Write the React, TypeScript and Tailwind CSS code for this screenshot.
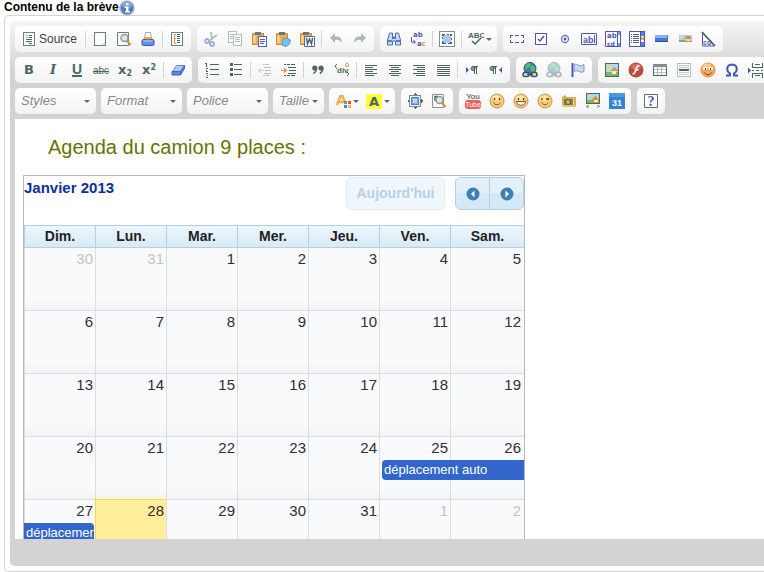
import React from "react";

type IconProps = { children: React.ReactNode; soft?: boolean; faded?: boolean };

function Icon({ children, soft, faded }: IconProps) {
  return (
    <svg
      width="16"
      height="16"
      viewBox="0 0 16 16"
      fill="none"
      shapeRendering={soft ? "auto" : "crispEdges"}
      className={faded ? "shrink-0 opacity-40" : "shrink-0"}
      aria-hidden="true"
    >
      {children}
    </svg>
  );
}

const INK = "#4c6666";
const BLUE = "#4f55b8";

function Sheet() {
  return <path d="M2.5 1.5h11v13h-11z" fill="#fdfdfd" stroke="#6a8080" />;
}

function Landscape() {
  return (
    <>
      <path d="M1.5 1.5h13v13h-13z" fill="#a9ddf5" stroke={INK} />
      <path d="M2 10h12v4H2z" fill="#7cc04b" />
      <path d="M3 3h3v3H3z" fill="#ffd34d" />
      <path d="M6 9l4-4 4 4z" fill="#ee8b35" />
      <path d="M8 9h4v3H8z" fill="#fff0cf" />
    </>
  );
}

function Clipboard() {
  return (
    <>
      <path d="M1.5 2.5h11v11h-11z" fill="#f2ac55" stroke="#c58a45" />
      <path d="M4 1h6v3H4z" fill="#6b7780" />
      <path d="M2 5h3v7H2z" fill="#f9cb86" />
    </>
  );
}

function Face({ mouth, wink }: { mouth: React.ReactNode; wink?: boolean }) {
  return (
    <Icon soft>
      <circle cx="8" cy="8" r="7" fill="#f9cb78" stroke="#c9924f" />
      <ellipse cx="7" cy="5" rx="4" ry="2.5" fill="#ffe8ab" />
      <path d={wink ? "M5 5v2M9 6h3" : "M5.5 5v2M10.5 5v2"} stroke="#5b3b14" strokeWidth="1.3" />
      {mouth}
    </Icon>
  );
}

function Globe({ faded }: { faded?: boolean }) {
  return (
    <Icon soft faded={faded}>
      <circle cx="8" cy="6.5" r="6" fill="#3a78dd" stroke="#2b5096" />
      <path d="M3 4l3-3 3 1-1 3-3 1-1 3zM10 3l3 2v4l-3 1-2-3z" fill="#56c44b" />
      <rect x="1" y="10.5" width="6" height="4" rx="2" fill="#dce5e5" stroke="#3c5656" strokeWidth="1.5" />
      <rect x="9" y="10.5" width="6" height="4" rx="2" fill="#dce5e5" stroke="#3c5656" strokeWidth="1.5" />
      <path d="M5 12.500h6" stroke="#3c5656" strokeWidth="1.5" />
    </Icon>
  );
}

function Magnifier() {
  return (
    <>
      <circle cx="8.5" cy="7" r="3.5" fill="#dce8ea" stroke="#8e9c9e" strokeWidth="1.5" />
      <path d="M11 10l3.5 4" stroke="#db8d35" strokeWidth="2.2" />
    </>
  );
}

function Align({ rows }: { rows: string }) {
  return (
    <Icon>
      <path d={rows} stroke={INK} />
    </Icon>
  );
}

const ICONS = {
  source: (
    <Icon>
      <Sheet />
      <path d="M8 4.500h3M8 6.500h3M5 8.500h6M5 10.500h6M8 12.500h3" stroke={INK} />
      <path d="M5 4.500h2M5 6.500h2" stroke="#e9a64a" />
    </Icon>
  ),
  page: (
    <Icon>
      <Sheet />
      <path d="M9 14l4-4v4z" fill="#d9dede" />
    </Icon>
  ),
  preview: (
    <Icon soft>
      <path d="M1.500 1.500h11v13h-11z" fill="#fdfdfd" stroke="#6a8080" />
      <Magnifier />
    </Icon>
  ),
  print: (
    <Icon soft>
      <path d="M5.500 1.500h5l1 6h-7z" fill="#f4f8ff" stroke="#9fa9bf" />
      <path d="M3 9l1-3h8l1 3z" fill="#f0a24c" />
      <rect x="2" y="8.500" width="12" height="6" rx="1.500" fill="#5d92ee" stroke="#3559bd" />
      <path d="M3.500 10h9" stroke="#b7d2ff" />
      <path d="M5 8.500h6" stroke="#a4641f" />
    </Icon>
  ),
  template: (
    <Icon>
      <Sheet />
      <path d="M8 3.500h3M8 5.500h3M8 7.500h3M8 9.500h3M8 11.500h3" stroke={INK} />
      <path d="M5.500 3v10M5 3.500h2M5 7.500h2M5 12.500h2" stroke="#e99b3c" />
    </Icon>
  ),
  cut: (
    <Icon soft>
      <path d="M8 1l1 8M14 4L6 10" stroke="#b4bfc4" strokeWidth="2" />
      <circle cx="4" cy="10" r="2" stroke="#9aabdf" strokeWidth="1.800" />
      <circle cx="9" cy="13" r="2" stroke="#9aabdf" strokeWidth="1.800" />
    </Icon>
  ),
  copy: (
    <Icon faded>
      <path d="M1.500 .5h8v11h-8z" fill="#fff" stroke={INK} />
      <path d="M3 3.500h4M3 5.500h4M3 7.500h4" stroke={INK} />
      <path d="M6.500 3.500h8v11h-8z" fill="#fff" stroke={INK} />
      <path d="M8 6.500h5M8 8.500h5M8 10.500h5" stroke={INK} />
    </Icon>
  ),
  paste: (
    <Icon>
      <Clipboard />
      <path d="M7.500 5.500h8v10h-8z" fill="#fff" stroke="#4468c8" />
      <path d="M9 8.500h5M9 10.500h5M9 12.500h4" stroke={BLUE} />
    </Icon>
  ),
  pasteText: (
    <Icon soft>
      <Clipboard />
      <path d="M7.500 8l4-1 4 2-1 4-3 2.500-4-1z" fill="#77bfe4" stroke="#5a9cc8" />
    </Icon>
  ),
  pasteWord: (
    <Icon soft>
      <Clipboard />
      <path d="M5.500 5.500h10v10h-10z" fill="#fff" stroke="#4468c8" />
      <path d="M7.500 7l1 6 2-5 2 5 1-6" stroke={INK} strokeWidth="1.500" />
    </Icon>
  ),
  undo: (
    <Icon soft>
      <path d="M2 7l5-5v3.500h2c4 0 5 3 5 6.500-1-2-2.500-3-5-3H7v3z" fill="#aab9b9" />
    </Icon>
  ),
  redo: (
    <Icon soft>
      <path d="M14 7L9 2v3.500H7c-4 0-5 3-5 6.500 1-2 2.500-3 5-3h2v3z" fill="#aab9b9" />
    </Icon>
  ),
  find: (
    <Icon soft>
      <path d="M3.500 2h3v4h3V2h3l2 7v5h-5v-4h-3v4h-5V9z" fill="#c3daf8" stroke="#4d6fc0" />
      <path d="M2 10h4M10 10h4M6 7h4" stroke="#3e5ba9" strokeWidth="1.500" />
    </Icon>
  ),
  replace: (
    <Icon soft>
      <text x="3" y="6" fontSize="7" fontWeight="700" fill={BLUE} fontFamily="DejaVu Sans, sans-serif">ab</text>
      <text x="7" y="15" fontSize="7" fontWeight="700" fill={BLUE} fontFamily="DejaVu Sans, sans-serif">
        a<tspan fill="#e79938">c</tspan>
      </text>
      <path d="M1.500 6v5H5M3.500 9l2 2-2 2" stroke={BLUE} />
    </Icon>
  ),
  selectAll: (
    <Icon>
      <path d="M.5 .5h15v15H.5z" fill="#fff" stroke="#7b8f8f" />
      <path d="M4 4h8v8H4z" fill="#a8c8f2" />
      <path d="M3.500 3.500h9v9h-9z" stroke={INK} strokeDasharray="2 2" />
      <path d="M3 3h2v2H3zM11 3h2v2h-2zM3 11h2v2H3zM11 11h2v2h-2z" fill={INK} />
    </Icon>
  ),
  spell: (
    <Icon soft>
      <text x="0" y="7" fontSize="8" fontWeight="700" fill={INK} fontFamily="Liberation Sans, sans-serif">ABC</text>
      <path d="M4 10l3 3 6-6" stroke={INK} strokeWidth="1.500" />
    </Icon>
  ),
  form: (
    <Icon>
      <path d="M1 4.500h3M6 4.500h4M12 4.500h3M1 11.500h3M6 11.500h4M12 11.500h3M1.500 4v3M1.500 9v3M14.500 4v3M14.500 9v3" stroke={BLUE} />
    </Icon>
  ),
  checkbox: (
    <Icon>
      <path d="M2.500 2.500h11v11h-11z" fill="#fafcff" stroke={BLUE} />
      <path d="M5 8l2 2 4-5" stroke={BLUE} strokeWidth="1.500" shapeRendering="auto" />
    </Icon>
  ),
  radio: (
    <Icon soft>
      <circle cx="8" cy="8" r="3.500" fill="#fff" stroke="#6b74c6" strokeWidth="1.300" />
      <circle cx="8" cy="8" r="1.500" fill={BLUE} />
    </Icon>
  ),
  textField: (
    <Icon soft>
      <path d="M.5 2.500h15v11H.5z" fill="#fff" stroke={BLUE} />
      <text x="2" y="12" fontSize="9" fontWeight="700" fill={BLUE} fontFamily="Liberation Sans, sans-serif">ab</text>
      <path d="M13.500 4v8" stroke={BLUE} />
    </Icon>
  ),
  textarea: (
    <Icon soft>
      <path d="M.5 .5h15v15H.5zM12.500 1v14" fill="#fff" stroke={BLUE} />
      <text x="2" y="7" fontSize="7" fontWeight="700" fill={BLUE} fontFamily="DejaVu Sans, sans-serif">
        ab
      </text>
      <text x="2" y="15" fontSize="6" fontWeight="700" fill={BLUE} fontFamily="DejaVu Sans, sans-serif">
        cd
      </text>
      <path d="M13 1h2v3h-2zM13 12h2v3h-2z" fill="#79a6e6" />
    </Icon>
  ),
  select: (
    <Icon>
      <path d="M.5 .5h15v15H.5zM11.500 1v14" fill="#fff" stroke={BLUE} />
      <path d="M2 3.500h1M4 3.500h6M2 5.500h1M4 5.500h6M2 7.500h1M4 7.500h6M2 9.500h1M4 9.500h6M2 11.500h1M4 11.500h6" stroke={INK} />
      <path d="M12 1h3v4h-3zM12 11h3v4h-3z" fill="#5a80d8" />
      <path d="M12 6h3v3h-3z" fill="#efa64c" />
    </Icon>
  ),
  button: (
    <Icon>
      <path d="M2 4h13v7H2z" fill="#4a78da" />
      <path d="M2 4h12v3H2z" fill="#8db2f0" />
      <path d="M2 10.500h13" stroke="#32479a" />
    </Icon>
  ),
  imageButton: (
    <Icon>
      <path d="M2 4h13v7H2z" fill="#a4d2f2" />
      <path d="M2 9h13v2H2z" fill="#8fa586" />
      <path d="M9 5h4v1h1v2H8V6h1z" fill="#ec8a34" />
      <path d="M9 8h5v2H9z" fill="#f8d49c" />
      <path d="M3 5h3v2H3z" fill="#f8e070" />
    </Icon>
  ),
  hidden: (
    <Icon soft>
      <path d="M1.500 2v13h12z" fill="#fff" stroke={BLUE} />
      <text x="2" y="14" fontSize="7" fontWeight="700" fill={BLUE} fontFamily="Liberation Sans, sans-serif">cd</text>
      <path d="M1 1l13 14" stroke={INK} strokeWidth="1.800" />
    </Icon>
  ),
  eraser: (
    <Icon soft>
      <path d="M6.500 3.500h8l-4 6h-8z" fill="#b0cdfa" stroke="#6480d4" />
      <path d="M2 9.500h8.500V13H2zM10.500 13V9.500l4-6v3z" fill="#5f86e2" stroke="#4a5cc0" />
    </Icon>
  ),
  numbered: (
    <Icon>
      <path d="M6 2.500h9M6 7.500h9M6 12.500h9M2.500 1v4M1 1.500h1M2 6.500h2M3 8.500H2M2 9.500h2M2 11.500h2M3 13.500h1M2 15.500h2" stroke={INK} />
    </Icon>
  ),
  bulleted: (
    <Icon>
      <path d="M6 2.500h8M6 7.500h8M6 12.500h8" stroke={INK} />
      <path d="M2 1h3v3H2zM2 6h3v3H2zM2 11h3v3H2z" fill={INK} />
    </Icon>
  ),
  outdent: (
    <Icon faded>
      <path d="M6 2.500h2M9 2.500h3M7 5.500h7M8 8.500h6M7 11.500h7M6 13.500h2M9 13.500h3" stroke={INK} />
      <path d="M1 8.500h6M3.500 6v5M2.500 7v3" stroke="#e99534" />
    </Icon>
  ),
  indent: (
    <Icon>
      <path d="M3 2.500h2M6 2.500h3M10 2.500h4M7 5.500h8M8 8.500h7M7 11.500h8M3 13.500h2M6 13.500h3M10 13.500h4" stroke={INK} />
      <path d="M0 8.500h6M3.500 6v5M4.500 7v3" stroke="#e99534" />
    </Icon>
  ),
  quote: (
    <Icon soft>
      <circle cx="4.800" cy="6" r="2.600" fill={INK} />
      <circle cx="11" cy="6" r="2.600" fill={INK} />
      <path d="M6.500 6c0 3-1 4.500-3 5.500M12.800 6c0 3-1 4.500-3 5.500" stroke={INK} strokeWidth="1.400" />
    </Icon>
  ),
  div: (
    <Icon soft>
      <text x="3" y="11" fontSize="8" fontWeight="700" fill={INK} fontFamily="Liberation Sans, sans-serif">div</text>
      <path d="M3 2L1 4l2 3M13 10l2 2-2 2" stroke={INK} />
      <path d="M13 1l2 2-2 2-2-2z" stroke="#e99534" />
    </Icon>
  ),
  left: <Align rows="M2 3.500h12M2 5.500h8M2 7.500h12M2 9.500h8M2 11.500h12M2 13.500h9" />,
  center: <Align rows="M2 3.500h12M4 5.500h8M2 7.500h12M4 9.500h8M2 11.500h12M4 13.500h8" />,
  right: <Align rows="M2 3.500h12M6 5.500h8M2 7.500h12M6 9.500h8M2 11.500h12M5 13.500h9" />,
  justify: <Align rows="M2 3.500h13M2 5.500h13M2 7.500h13M2 9.500h13M2 11.500h13M2 13.500h13" />,
  ltr: (
    <Icon soft>
      <path d="M2 5l3 3-3 3z" fill={BLUE} />
      <path d="M14 4.500H9a2 2 0 000 4h1M10.500 4v8M12.500 4v8" fill="#869898" stroke={INK} />
    </Icon>
  ),
  rtl: (
    <Icon soft>
      <path d="M14 5l-3 3 3 3z" fill={BLUE} />
      <path d="M9 4.500H4a2 2 0 000 4h1M5.500 4v8M7.500 4v8" fill="#869898" stroke={INK} />
    </Icon>
  ),
  link: <Globe />,
  unlink: <Globe faded />,
  anchor: (
    <Icon soft>
      <path d="M2.500 1v14" stroke={BLUE} strokeWidth="2" />
      <path d="M4 2.500c2-1 3 0 5 1s3 0 5-1v7c-2 1-3 1-5 0s-3-1-5 0z" fill="#ccdaf0" stroke="#8393d2" />
    </Icon>
  ),
  image: (
    <Icon>
      <Landscape />
    </Icon>
  ),
  flash: (
    <Icon soft>
      <circle cx="8" cy="8" r="7" fill="#c24639" stroke="#a5483f" />
      <ellipse cx="8" cy="5" rx="5" ry="3" fill="#dc6c5c" />
      <path d="M11.500 3.500C8 3.500 8 8 7 10c-.5 1.500-1 2-2.500 2M7 8h3.500" stroke="#fff" strokeWidth="1.700" />
    </Icon>
  ),
  table: (
    <Icon>
      <path d="M1.500 2.500h13v11h-13z" fill="#fff" stroke={INK} />
      <path d="M1 2h14v3H1z" fill="#7d9090" />
      <path d="M2 7.500h12M2 10.500h12M5.500 5v8M9.500 5v8" stroke="#b2bdbd" />
    </Icon>
  ),
  rule: (
    <Icon>
      <path d="M1.500 1.500h13v13h-13z" fill="#fff" stroke="#b5bfbf" />
      <path d="M3 3.500h10M3 5.500h10M3 10.500h10M3 12.500h10" stroke="#c1c9c9" />
      <path d="M3 7h10v2H3z" fill={INK} />
    </Icon>
  ),
  smiley: (
    <Icon soft>
      <circle cx="8" cy="8" r="7" fill="#f5a557" stroke="#e39048" />
      <ellipse cx="7" cy="4" rx="4" ry="2.500" fill="#ffc98c" />
      <path d="M3 6.500h4M9 6.500h4" stroke="#fff" strokeWidth="2.500" />
      <path d="M5.500 6v2M10.500 6v2M4.500 10.500c2 3 5 3 7 0" stroke="#7b3b18" />
    </Icon>
  ),
  omega: (
    <Icon soft>
      <path d="M2 13.500h4v-2C2 9 2 3 8 2.500 14 3 14 9 10 11.500v2h4" stroke="#4059ba" strokeWidth="2" />
    </Icon>
  ),
  pageBreak: (
    <Icon>
      <path d="M4.500 1v4.500h10V1M4.500 15.500v-4h10v4M4 8.500h2M8 8.500h3M13 8.500h2M7 2.500h5M7 13.500h5" stroke={INK} />
      <path d="M0 6l3 2.500L0 11z" fill={BLUE} />
    </Icon>
  ),
  textColor: (
    <Icon soft>
      <path d="M2 12L5.500 3h2l3 8M4 9h5" stroke="#f3ab55" strokeWidth="2.500" />
      <path d="M9 8h3v3H9z" fill="#64ae3d" />
      <path d="M13 8h3v3h-3z" fill="#e34b43" />
      <path d="M9 12h3v3H9z" fill="#4f7fe1" />
      <path d="M13 12h3v3h-3z" fill="#f1bd35" />
    </Icon>
  ),
  maximize: (
    <Icon>
      <path d="M2.500 2.500h11v11h-11z" fill="#f4faff" stroke="#7d9090" />
      <path d="M4.500 4.500h7v7h-7z" fill="#84aef0" stroke="#5a78d4" />
      <path d="M6 6h4v4H6z" fill="#bad4fb" />
      <path d="M6 2l2-2 2 2zM6 14l2 2 2-2zM2 6L0 8l2 2zM14 6l2 2-2 2z" fill={INK} />
    </Icon>
  ),
  blocks: (
    <Icon soft>
      <path d="M1.500 1.500h11v13h-11z" fill="#fff" stroke="#869696" />
      <path d="M4 8V3.500h3" stroke={INK} strokeWidth="1.500" />
      <Magnifier />
    </Icon>
  ),
  youtube: (
    <Icon soft>
      <text x="8" y="6" textAnchor="middle" fontSize="8" fill="#333" fontFamily="Liberation Sans, sans-serif">You</text>
      <rect x="0" y="7" width="16" height="9" rx="3" fill="#ee5c5b" />
      <text x="8" y="14" textAnchor="middle" fontSize="7" fill="#fff" fontFamily="Liberation Sans, sans-serif">Tube</text>
    </Icon>
  ),
  smile: <Face mouth={<path d="M4.500 9.500c1.500 3 5.500 3 7 0" stroke="#8b5a24" />} />,
  grin: <Face mouth={<path d="M3.500 8.500h9c0 5-9 5-9 0z" fill="#fff" stroke="#8b5a24" />} />,
  wink: <Face wink mouth={<path d="M4.500 9.500c2 3 5 3 7 0" stroke="#8b5a24" />} />,
  media: (
    <Icon soft>
      <path d="M1 4l3-2 2 2h9v9l-2 1H3l-2-2z" fill="#d2b04d" />
      <path d="M3 6h9v6H3z" fill="#8a7d4a" />
      <circle cx="7" cy="9" r="2.500" fill="#c9b870" stroke="#5c5a38" />
      <path d="M12.500 5v8M3 13h9" stroke="#eddb87" />
    </Icon>
  ),
  slideshow: (
    <Icon>
      <path d="M1.500 .5h13v10h-13z" fill="#9fdbf5" stroke={INK} />
      <path d="M2 7h12v3H2z" fill="#7abd49" />
      <path d="M7 6l3-3 4 3v2H7z" fill="#ec8a34" />
      <path d="M9 7h4v2H9z" fill="#fff0cf" />
      <path d="M3 2h3v2H3z" fill="#ffd34d" />
      <path d="M4 12l-2 1.500L4 15M12 12l2 1.500-2 1.500" stroke="#999" />
    </Icon>
  ),
  calendar: (
    <Icon soft>
      <path d="M0 0h16v16H0z" fill="#2f83d2" />
      <path d="M0 0h16v4H0z" fill="#479ae2" />
      <text x="8" y="13" textAnchor="middle" fontSize="9" fontWeight="700" fill="#fff" fontFamily="Liberation Sans, sans-serif">31</text>
    </Icon>
  ),
  about: (
    <Icon soft>
      <path d="M1.500 1.500h13v13h-13z" fill="#fff" stroke="#606f6f" />
      <text x="8" y="13" textAnchor="middle" fontSize="14" fontWeight="700" fill={BLUE} fontFamily="Liberation Serif, serif">?</text>
    </Icon>
  ),
};

function Caret() {
  return <span className="h-0 w-0 border-x-3 border-t-3 border-x-transparent border-t-[#666]" />;
}

function Group({ children }: { children: React.ReactNode }) {
  return (
    <div className="mr-1.5 flex h-[26px] shrink-0 items-center rounded-[5px] bg-linear-to-b from-white to-[#f3f3f3] px-0.5">
      {children}
    </div>
  );
}

function Tool({ label, children, menu }: { label: string; children: React.ReactNode; menu?: boolean }) {
  return (
    <button
      type="button"
      aria-label={label}
      className={
        "flex h-6 shrink-0 items-center " + (menu ? "w-[31px] gap-0.5 pl-1" : "w-6 justify-center")
      }
    >
      {children}
      {menu && <Caret />}
    </button>
  );
}

function Tools({ names }: { names: (keyof typeof ICONS)[] }) {
  return (
    <>
      {names.map((name) => (
        <Tool key={name} label={name}>
          {ICONS[name]}
        </Tool>
      ))}
    </>
  );
}

function Separator() {
  return <span className="mx-0.5 h-4 w-px shrink-0 bg-[#d2d2d2]" />;
}

function Combo({ label, narrow }: { label: string; narrow?: boolean }) {
  return (
    <div className={"relative mr-[5px] shrink-0 " + (narrow ? "w-[51px]" : "w-[81px]")}>
      <select
        aria-label={label}
        className="h-[26px] w-full appearance-none rounded-[5px] bg-linear-to-b from-white to-[#f3f3f3] pl-1.5 text-[13px] text-[#888] italic"
      >
        <option>{label}</option>
      </select>
      <span className="pointer-events-none absolute inset-y-0 right-1.5 flex items-center">
        <Caret />
      </span>
    </div>
  );
}

function Toolbar() {
  return (
    <div className="flex flex-col gap-[5px] pb-[5px] text-[#4c6666]">
      <div className="flex">
        <Group>
          <button type="button" className="flex h-6 w-[66px] shrink-0 items-center gap-0.5 pl-1 text-[12px] text-[#444]">
            {ICONS.source}
            <span>Source</span>
          </button>
          <Separator />
          <Tools names={["page", "preview", "print"]} />
          <Separator />
          <Tools names={["template"]} />
        </Group>
        <Group>
          <Tools names={["cut", "copy", "paste", "pasteText", "pasteWord"]} />
          <Separator />
          <Tools names={["undo", "redo"]} />
        </Group>
        <Group>
          <Tools names={["find", "replace"]} />
          <Separator />
          <Tools names={["selectAll"]} />
          <Separator />
          <Tool label="spell" menu>
            {ICONS.spell}
          </Tool>
        </Group>
        <Group>
          <Tools
            names={["form", "checkbox", "radio", "textField", "textarea", "select", "button", "imageButton", "hidden"]}
          />
        </Group>
      </div>
      <div className="flex">
        <Group>
          <Tool label="Gras">
            <b className="font-['DejaVu_Sans',sans-serif] text-[13px]">B</b>
          </Tool>
          <Tool label="Italique">
            <i className="font-['DejaVu_Serif',serif] text-[13px] font-bold">I</i>
          </Tool>
          <Tool label="Souligné">
            <b className="border-b-2 border-[#4c6666] text-[14px] leading-[12px]">U</b>
          </Tool>
          <Tool label="Barré">
            <s className="text-[10px]">abc</s>
          </Tool>
          <Tool label="Indice">
            <b className="font-['DejaVu_Sans',sans-serif] text-[13px]">
              x<sub className="text-[8px]">2</sub>
            </b>
          </Tool>
          <Tool label="Exposant">
            <b className="font-['DejaVu_Sans',sans-serif] text-[13px]">
              x<sup className="text-[8px]">2</sup>
            </b>
          </Tool>
          <Separator />
          <Tools names={["eraser"]} />
        </Group>
        <Group>
          <Tools names={["numbered", "bulleted"]} />
          <Separator />
          <Tools names={["outdent", "indent"]} />
          <Separator />
          <Tools names={["quote", "div"]} />
          <Separator />
          <Tools names={["left", "center", "right", "justify"]} />
          <Separator />
          <Tools names={["ltr", "rtl"]} />
        </Group>
        <Group>
          <Tools names={["link", "unlink", "anchor"]} />
        </Group>
        <Group>
          <Tools names={["image", "flash", "table", "rule", "smiley", "omega", "pageBreak"]} />
        </Group>
      </div>
      <div className="flex">
        <Combo label="Styles" />
        <Combo label="Format" />
        <Combo label="Police" />
        <Combo label="Taille" narrow />
        <Group>
          <Tool label="Couleur de texte" menu>
            {ICONS.textColor}
          </Tool>
          <Tool label="Couleur d'arrière-plan" menu>
            <b className="w-4 bg-[#ffff3c] text-center font-['DejaVu_Sans',sans-serif] text-[13px] leading-[15px]">A</b>
          </Tool>
        </Group>
        <Group>
          <Tools names={["maximize", "blocks"]} />
        </Group>
        <Group>
          <Tools names={["youtube", "smile", "grin", "wink", "media", "slideshow", "calendar"]} />
        </Group>
        <Group>
          <Tools names={["about"]} />
        </Group>
      </div>
    </div>
  );
}

const DAYS = ["Dim.", "Lun.", "Mar.", "Mer.", "Jeu.", "Ven.", "Sam."];

const WEEKS = [
  [30, 31, 1, 2, 3, 4, 5],
  [6, 7, 8, 9, 10, 11, 12],
  [13, 14, 15, 16, 17, 18, 19],
  [20, 21, 22, 23, 24, 25, 26],
  [27, 28, 29, 30, 31, 1, 2],
];

function Arrow({ left }: { left?: boolean }) {
  return (
    <svg width="14" height="14" viewBox="0 0 14 14" aria-hidden="true">
      <circle cx="7" cy="7" r="6.500" fill="#3d80b3" />
      <path d={left ? "M8.500 3.500v7L5 7z" : "M5.500 3.500v7L9 7z"} fill="#fff" />
    </svg>
  );
}

function Day({ week, col }: { week: number; col: number }) {
  const day = WEEKS[week][col];
  const outside = (week === 0 && day > 20) || (week === 4 && day < 20);
  const today = week === 4 && day === 28;
  return (
    <td
      className={
        "relative border-l p-0 align-top " +
        (week > 0 ? "h-[63px] border-t " : "h-[62px] ") +
        (today
          ? "border-[#f9dd34] bg-[#ffef9b] "
          : "border-[#dddddd] bg-linear-to-b from-[#f9fafc] from-80% to-[#f2f5f7] ")
      }
    >
      <div
        className={
          "text-right text-[15px] leading-[22px] " +
          (col === 6 ? "pr-[3px] " : "pr-0.5 ") +
          (outside ? "text-[#c4c4c4]" : "text-[#362b36]")
        }
      >
        {day}
      </div>
      {week === 3 && col === 5 && (
        <a
          href="#evenement-25"
          className="absolute top-[23px] left-0.5 z-10 block h-5 w-[142px] rounded-l-sm bg-[#3366cc] pl-0.5 text-[13px] leading-5 text-white"
        >
          déplacement auto
        </a>
      )}
      {week === 4 && col === 0 && (
        <a
          href="#evenement-27"
          className="absolute top-[23px] left-[-1px] z-10 block h-5 w-[70px] overflow-hidden rounded-r-sm bg-[#3366cc] pl-0.5 text-[13px] leading-5 whitespace-nowrap text-white"
        >
          déplacement auto
        </a>
      )}
    </td>
  );
}

function Calendar() {
  return (
    <div className="ml-2 w-[502px] border border-[#b8b8b8]">
      <div className="flex h-[49px] items-start pt-px">
        <h2 className="flex-1 text-[15px] leading-[22px] font-bold text-[#0a309c]">Janvier 2013</h2>
        <button
          type="button"
          disabled
          className="mr-2.5 h-[33px] w-[99px] rounded-md border border-[#dfedf8] bg-[#eff7fd] text-[14px] font-bold text-[#b5d1e5]"
        >
          Aujourd'hui
        </button>
        <div className="flex h-[33px] w-[69px] rounded-md border border-[#aed0ea] bg-linear-to-b from-[#e3f0f9] from-50% to-[#d5e8f5] to-50%">
          <button type="button" aria-label="Mois précédent" className="flex flex-1 items-center justify-center">
            <Arrow left />
          </button>
          <button
            type="button"
            aria-label="Mois suivant"
            className="flex flex-1 items-center justify-center border-l border-[#aed0ea]"
          >
            <Arrow />
          </button>
        </div>
      </div>
      <table className="w-full table-fixed border-separate border-spacing-0">
        <colgroup>
          {DAYS.map((name, i) => (
            <col key={name} className={i < 6 ? "w-[71px]" : ""} />
          ))}
        </colgroup>
        <thead>
          <tr>
            {DAYS.map((name) => (
              <th
                key={name}
                scope="col"
                className="h-[23px] border-y border-l border-[#aed0ea] bg-linear-to-b from-[#edf6fc] to-[#d8eaf6] p-0 text-[14px] leading-[21px] font-bold text-[#222]"
              >
                {name}
              </th>
            ))}
          </tr>
        </thead>
        <tbody>
          {WEEKS.map((days, week) => (
            <tr key={week}>
              {days.map((_, col) => (
                <Day key={col} week={week} col={col} />
              ))}
            </tr>
          ))}
        </tbody>
      </table>
    </div>
  );
}

export default function App() {
  return (
    <main className="overflow-hidden bg-white font-['Liberation_Sans',Arial,sans-serif] text-black">
      <div className="flex h-[15px] items-center pl-1 text-[12px] leading-[15px] font-bold">
        <span id="editor-label">Contenu de la brève</span>
        <svg width="16" height="16" viewBox="0 0 16 16" className="shrink-0" aria-hidden="true">
          <circle cx="8" cy="8" r="7" fill="#527fb7" stroke="#a9b9cc" strokeWidth="1.500" />
          <ellipse cx="8" cy="5" rx="5" ry="3.500" fill="#84a6cf" />
          <path d="M7 3h2.500v2H7zM6 6.500h3.500V11H11v1.500H6V11h1V8H6z" fill="#fff" />
        </svg>
      </div>
      <div className="ml-1 rounded-l-[5px] border border-r-0 border-[#d3d3d3] py-[5px] pl-[5px]">
        <div className="rounded-l-[5px] bg-[#d3d3d3] bg-[linear-gradient(to_bottom,#f5f5f5,#d3d3d3_50px)] pt-[5px] pb-[27px] pl-[5px]">
          <Toolbar />
          <section aria-labelledby="editor-label" className="h-[420px] overflow-hidden bg-white">
            <h1 className="pt-4 pb-4 pl-[33px] text-[20px] leading-6 text-[#667300]">Agenda du camion 9 places :</h1>
            <Calendar />
          </section>
        </div>
      </div>
    </main>
  );
}
